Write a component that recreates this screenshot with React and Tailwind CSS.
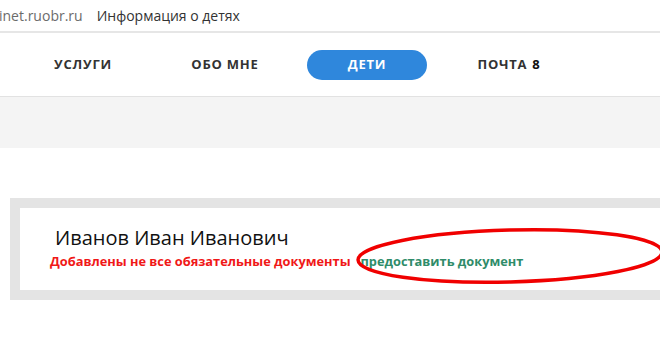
export default function App() {
    const tabs = [
        { label: "УСЛУГИ" },
        { label: "ОБО МНЕ" },
        { label: "ДЕТИ", active: true },
        { label: "ПОЧТА", badge: "8" },
    ]

    return (
        <div className="relative w-[660px] h-[360px] overflow-hidden bg-white font-['Open_Sans',sans-serif]">
            {/* address bar */}
            <div className="h-[31px] flex items-center gap-[14px] text-[14px] -ml-[1px]">
                <span className="text-[#6b6b6b]">inet.ruobr.ru</span>
                <span className="text-[#333]">Информация о детях</span>
            </div>
            <div className="h-[2px] bg-[#e6e6e6]" />

            {/* nav */}
            <div className="h-[64px] flex items-center pl-[12px] border-b border-[#e2e2e2]">
                {tabs.map((t) => (
                    <div key={t.label} className="w-[142px] flex justify-center">
                        {t.active ? (
                            <div className="w-[120px] h-[30px] rounded-full bg-[#2f87dc] flex items-center justify-center text-white text-[13px] font-bold tracking-[0.06em]">
                                {t.label}
                            </div>
                        ) : (
                            <span className="text-[13px] font-bold tracking-[0.06em] text-[#333]">
                                {t.label}
                                {t.badge && <span className="ml-[5px] text-[#111]">{t.badge}</span>}
                            </span>
                        )}
                    </div>
                ))}
            </div>
            <div className="h-[51px] bg-[#f4f4f4]" />

            {/* child card */}
            <div className="mt-[50px] ml-[10px] w-[680px] border-[10px] border-[#e4e4e4] bg-white h-[102px] pl-[35px] pt-[17px]">
                <div className="text-[20px] leading-[26px] text-[#111]">Иванов Иван Иванович</div>
                <div className="-ml-[5px] mt-[1px] flex items-center gap-[10px] text-[12.8px] font-bold">
                    <span className="text-[#f01818]">Добавлены не все обязательные документы</span>
                    <span className="text-[#2f8c6a]">предоставить документ</span>
                </div>
            </div>

            {/* annotation */}
            <svg className="absolute left-0 top-0 pointer-events-none" width="660" height="360">
                <ellipse cx="510" cy="256" rx="152" ry="26" fill="none" stroke="#f00000" strokeWidth="3.5" transform="rotate(-1.5 510 256)" />
            </svg>
        </div>
    )
}
